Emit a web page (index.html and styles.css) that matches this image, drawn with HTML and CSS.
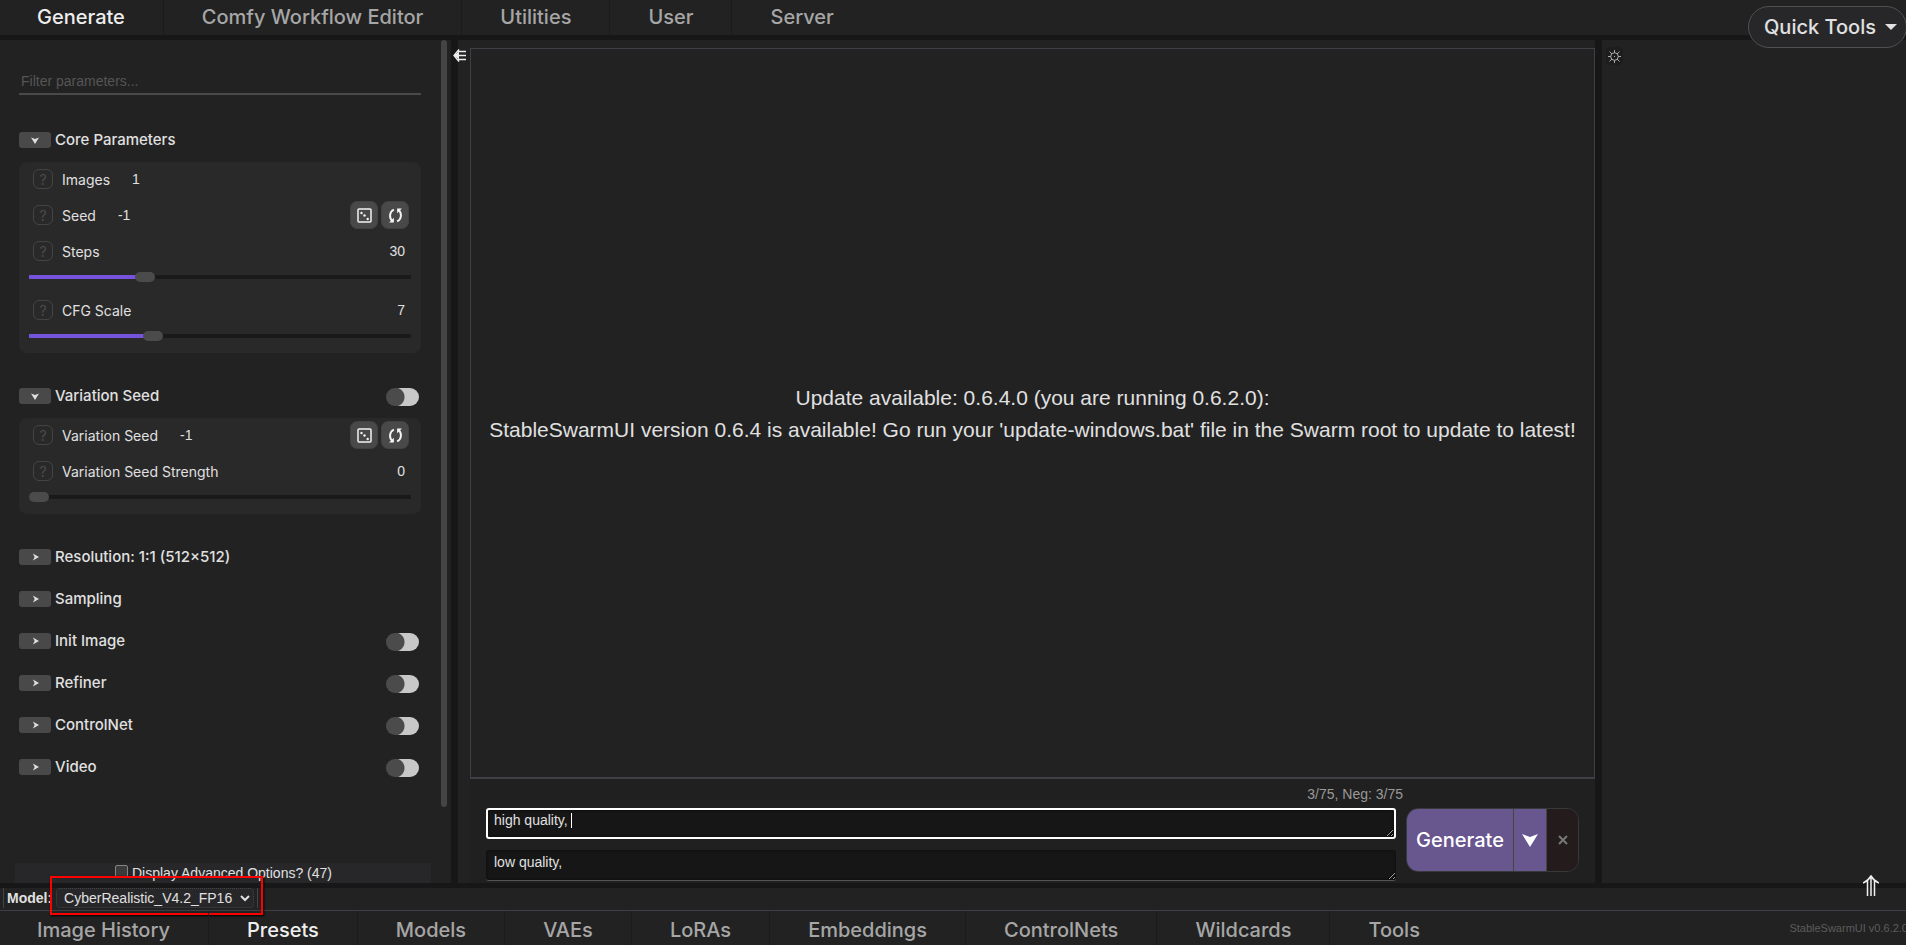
FILE: index.html
```html
<!DOCTYPE html>
<html lang="en">
<head>
<meta charset="utf-8">
<title>StableSwarmUI</title>
<link rel="stylesheet" href="styles.css">
</head>
<body>
<svg class="defs" aria-hidden="true">
  <symbol id="i-down" viewBox="0 0 16 14"><path d="M0 1l8 3 8-3-8 13z"/></symbol>
  <symbol id="i-right" viewBox="0 0 8 8"><path d="M1 0l7 4-7 4 2-4z"/></symbol>
  <symbol id="i-dice" viewBox="0 0 15 15"><rect x="1" y="1" width="13" height="13" rx="1" fill="none" stroke="currentColor" stroke-width="1.5"/><circle cx="4.5" cy="5" r="1.2"/><circle cx="7.5" cy="7.5" r="1.2"/><circle cx="10.700" cy="11" r="1.2"/></symbol>
  <symbol id="i-loop" viewBox="0 0 14 14"><path d="M5.500 1.500C1 3.500 1 9.500 4 12M8.500 12.500C13 10.500 13 4.500 10 2" fill="none" stroke="currentColor" stroke-width="1.800"/><path d="M1 13.500h4.500V9zM13 .5H8.500V5z"/></symbol>
</svg>
<div class="app">
  <nav class="tabs tabs-top">
    <a href="#generate" class="tab active">Generate</a>
    <a href="#comfy" class="tab">Comfy Workflow Editor</a>
    <a href="#utilities" class="tab">Utilities</a>
    <a href="#user" class="tab">User</a>
    <a href="#server" class="tab">Server</a>
    <button class="quick" type="button">Quick Tools<span class="caret-down"></span></button>
  </nav>
  <div class="split-h"></div>
  <main class="work">
    <aside class="side">
      <div class="side-body">
        <input class="filter" type="text" placeholder="Filter parameters..." aria-label="Filter parameters">
        <div class="groups">
        <section>
          <div class="head"><button class="fold" type="button" aria-label="Collapse Core Parameters"><svg class="down"><use href="#i-down"/></svg></button><h2>Core Parameters</h2></div>
          <div class="box">
            <div class="row"><button class="help" type="button">?</button><label for="images">Images</label><input id="images" class="num" value="1"></div>
            <div class="row"><button class="help" type="button">?</button><label for="seed">Seed</label><input id="seed" class="num" value="-1"><button class="sq" type="button" aria-label="Random seed"><svg><use href="#i-dice"/></svg></button><button class="sq" type="button" aria-label="Reuse seed"><svg><use href="#i-loop"/></svg></button></div>
            <div class="row"><button class="help" type="button">?</button><label for="steps">Steps</label><input class="num end" value="30" aria-label="Steps value"></div>
            <input id="steps" class="slider" type="range" min="1" max="100" value="30" style="--fill:30%">
            <div class="row"><button class="help" type="button">?</button><label for="cfg">CFG Scale</label><input class="num end" value="7" aria-label="CFG Scale value"></div>
            <input id="cfg" class="slider" type="range" min="1" max="20" value="7" style="--fill:33%">
          </div>
        </section>
        <section>
          <div class="head"><button class="fold" type="button" aria-label="Collapse Variation Seed"><svg class="down"><use href="#i-down"/></svg></button><h2>Variation Seed</h2><input class="toggle" type="checkbox" aria-label="Variation Seed"></div>
          <div class="box">
            <div class="row"><button class="help" type="button">?</button><label for="vseed">Variation Seed</label><input id="vseed" class="num" value="-1"><button class="sq" type="button" aria-label="Random variation seed"><svg><use href="#i-dice"/></svg></button><button class="sq" type="button" aria-label="Reuse variation seed"><svg><use href="#i-loop"/></svg></button></div>
            <div class="row"><button class="help" type="button">?</button><label for="vstr">Variation Seed Strength</label><input class="num end" value="0" aria-label="Variation Seed Strength value"></div>
            <input id="vstr" class="slider" type="range" min="0" max="1" value="0" style="--fill:0%">
          </div>
        </section>
        <section>
          <div class="head"><button class="fold" type="button" aria-label="Expand Resolution"><svg class="right"><use href="#i-right"/></svg></button><h2>Resolution: 1:1 (512×512)</h2></div>
          <div class="head"><button class="fold" type="button" aria-label="Expand Sampling"><svg class="right"><use href="#i-right"/></svg></button><h2>Sampling</h2></div>
          <div class="head"><button class="fold" type="button" aria-label="Expand Init Image"><svg class="right"><use href="#i-right"/></svg></button><h2>Init Image</h2><input class="toggle" type="checkbox" aria-label="Init Image"></div>
          <div class="head"><button class="fold" type="button" aria-label="Expand Refiner"><svg class="right"><use href="#i-right"/></svg></button><h2>Refiner</h2><input class="toggle" type="checkbox" aria-label="Refiner"></div>
          <div class="head"><button class="fold" type="button" aria-label="Expand ControlNet"><svg class="right"><use href="#i-right"/></svg></button><h2>ControlNet</h2><input class="toggle" type="checkbox" aria-label="ControlNet"></div>
          <div class="head"><button class="fold" type="button" aria-label="Expand Video"><svg class="right"><use href="#i-right"/></svg></button><h2>Video</h2><input class="toggle" type="checkbox" aria-label="Video"></div>
        </section>
        </div>
        <label class="advanced"><input type="checkbox">Display Advanced Options? (47)</label>
      </div>
      <div class="scroll"><div class="scroll-thumb"></div></div>
    </aside>
    <div class="split-v"></div>
    <section class="center">
      <button class="collapse" type="button" aria-label="Collapse sidebar"><svg viewBox="0 0 13 13"><path d="M5 2.500h8M2 6.500h11M5 10.500h8M6 .5L1 6.500l5 6" fill="none" stroke="currentColor" stroke-width="1.400"/><path d="M1 6.500l5-4v8z"/></svg></button>
      <div class="stage">
        <div class="canvas">
          <p>Update available: 0.6.4.0 (you are running 0.6.2.0):<br>StableSwarmUI version 0.6.4 is available! Go run your 'update-windows.bat' file in the Swarm root to update to latest!</p>
        </div>
        <div class="prompts">
          <div class="fields">
            <div class="tokens">3/75, Neg: 3/75</div>
            <div class="field"><textarea class="prompt focus" aria-label="Prompt">high quality, </textarea><span class="cursor"></span></div>
            <textarea class="prompt" aria-label="Negative prompt">low quality,</textarea>
          </div>
          <div class="go">
            <button class="go-main" type="button">Generate</button>
            <button class="go-more" type="button" aria-label="Generate options"><svg><use href="#i-down"/></svg></button>
            <button class="go-stop" type="button" aria-label="Interrupt"><svg viewBox="0 0 10 10"><path d="M1 1l8 8M9 1L1 9" stroke="currentColor" stroke-width="2"/></svg></button>
          </div>
        </div>
      </div>
    </section>
    <div class="split-v"></div>
    <aside class="batch">
      <button class="gear" type="button" aria-label="Display settings"><svg viewBox="0 0 13 13"><circle cx="6.500" cy="6.500" r="3.800" fill="none" stroke="currentColor"/><path d="M6.500 0v3M6.500 10v3M0 6.500h3M10 6.500h3M1.500 1.500l2.500 2.500M11.500 1.500L9 4M1.500 11.500L4 9M11.500 11.500L9 9M6 6.500h1" stroke="currentColor"/></svg></button>
    </aside>
  </main>
  <div class="split-h"><button class="raise" type="button" aria-label="Expand bottom bar"><svg viewBox="0 0 16 21"><path d="M4.500 5v16M8 1v20M11.500 5v16M0 8q5-2 8-7 3 5 8 7" fill="none" stroke="currentColor" stroke-width="1.500"/></svg></button></div>
  <div class="model">
    <div class="model-in"><label for="model">Model:</label><div class="pick"><select id="model"><option>CyberRealistic_V4.2_FP16</option></select><svg viewBox="0 0 10 7"><path d="M1 1l4 4 4-4" fill="none" stroke="currentColor" stroke-width="2"/></svg><span class="marker"></span></div></div>
  </div>
  <nav class="tabs tabs-bottom">
    <a href="#history" class="tab">Image History</a>
    <a href="#presets" class="tab active">Presets</a>
    <a href="#models" class="tab">Models</a>
    <a href="#vaes" class="tab">VAEs</a>
    <a href="#loras" class="tab">LoRAs</a>
    <a href="#embeddings" class="tab">Embeddings</a>
    <a href="#controlnets" class="tab">ControlNets</a>
    <a href="#wildcards" class="tab">Wildcards</a>
    <a href="#tools" class="tab">Tools</a>
    <span class="version"><span>StableSwarmUI v0.6.2.0</span></span>
  </nav>
</div>
</body>
</html>
```
FILE: styles.css
```css
* { box-sizing: border-box; }
body { margin: 0; background: #222; color: #e0e0e0; font: 14px "Liberation Sans", sans-serif; overflow: hidden; }
button, input, select, textarea { font: inherit; color: inherit; margin: 0; padding: 0; border: 0; background: none; }
svg { fill: currentColor; display: block; }
.defs { display: none; }
.app { height: 100vh; display: flex; flex-direction: column; }

.tabs { display: flex; flex: none; font: 500 20px Inter, sans-serif; position: relative; }
.tab { display: flex; align-items: center; padding: 0 38px; color: #a6a6a6; text-decoration: none; border-right: 1px solid #1b1b1b; white-space: nowrap; }
.tab:first-child { padding-left: 37px; }
.tab:nth-last-child(2) { border-right: 0; }
.tab.active { color: #eee; }
.tabs-top { height: 35px; }
.tabs-top .tab { padding-bottom: 2px; }
.tabs-bottom { height: 34px; }
.tabs-bottom .tab { padding-top: 3px; }
.quick { position: absolute; right: -1px; top: 6px; z-index: 2; width: 159px; height: 42px; border: 1px solid #505050; border-radius: 21px; background: #27272a; display: flex; align-items: center; gap: 9px; padding-left: 15px; white-space: nowrap; }
.caret-down { border: 6px solid transparent; border-top-color: #e0e0e0; border-bottom: 0; }

.split-h { flex: none; height: 5px; background: #171717; position: relative; }
.split-v { flex: none; width: 7px; background: #171717; }
.work { flex: 1; display: flex; min-height: 0; }

.side { width: 451px; flex: none; display: flex; justify-content: space-between; }
.side-body { flex: 1; display: flex; flex-direction: column; min-height: 0; }
.filter { margin: 28px 20px 24px 19px; height: 27px; flex: none; padding-left: 2px; border-bottom: 2px solid #4a4a4a; outline: 0; }
.filter::placeholder { color: #555; }
.groups { flex: 1; min-height: 0; margin: 0 20px 0 19px; display: flex; flex-direction: column; gap: 22px; }
.head { display: flex; align-items: center; height: 42px; }
.head h2 { margin: 0 auto 0 4px; padding-bottom: 2px; font: 500 15px Inter, sans-serif; }
.fold { width: 32px; height: 16px; border-radius: 3px; background: #494949; display: flex; align-items: center; justify-content: center; }
.down { width: 8px; height: 7px; }
.right { width: 7px; height: 8px; }
.toggle { appearance: none; width: 33px; height: 18px; margin: 2px 2px 0 0; border-radius: 9px; background: radial-gradient(circle at 9px 9px, #4b4b4b 9px, #c8c8c8 10px); }
.box { background: #292929; border-radius: 8px; margin-top: 1px; padding: 0 10px 1px; display: flex; flex-direction: column; }
.row { height: 36px; display: flex; align-items: center; gap: 3px; padding: 0 2px 2px 4px; }
.row label { font: 14px Inter, sans-serif; margin-left: 6px; white-space: nowrap; }
.help { width: 20px; height: 20px; flex: none; border: 1px solid #444; border-radius: 6px; color: #4c4c4c; font: 14px Inter, sans-serif; }
.num { flex: 1; min-width: 0; width: 40px; padding-left: 19px; }
.num.end { text-align: right; padding-right: 4px; }
.sq { width: 28px; height: 28px; flex: none; border-radius: 7px; border: 1px solid #414145; background: #494949; color: #f4f4f4; display: flex; align-items: center; justify-content: center; }
.sq svg { width: 15px; height: 15px; }
.slider { appearance: none; width: 100%; height: 14px; margin: 0 0 9px; background: linear-gradient(90deg, #7553dc var(--fill), #1a1a1a var(--fill)) center / 100% 4px no-repeat; }
.slider::-webkit-slider-thumb { appearance: none; width: 20px; height: 10px; border-radius: 5px; background: #4b4b4b; }
.advanced { flex: none; height: 20px; overflow: hidden; margin: 0 10px 0 15px; background: #27272a; display: flex; justify-content: center; gap: 4px; line-height: 20px; padding-left: 1px; white-space: nowrap; }
.advanced input { appearance: none; width: 13px; height: 13px; margin-top: 2px; border: 1px solid #858585; border-radius: 2px; background: #3b3b3b; }
.scroll { width: 10px; flex: none; }
.scroll-thumb { width: 6px; height: 91%; border-radius: 3px; background: #444; }

.center { flex: 1; min-width: 0; display: flex; position: relative; padding: 8px 0 0 12px; }
.collapse { position: absolute; left: -5px; top: 9px; width: 13px; height: 13px; color: #eee; }
.stage { flex: 1; min-width: 0; display: flex; flex-direction: column; }
.canvas { flex: 1; border: 1px solid #3f3f46; border-bottom-width: 2px; display: flex; align-items: center; justify-content: center; text-align: center; }
.canvas p { margin: 0; padding-top: 2px; font-size: 21px; line-height: 32px; }
.prompts { flex: none; background: #202020; display: flex; padding: 6px 16px 2px; gap: 10px; }
.fields { flex: 1; min-width: 0; }
.tokens { text-align: right; color: #999; line-height: 18px; margin: 0 -7px 5px 0; }
.field { position: relative; margin-bottom: 11px; }
.prompt { display: block; width: 100%; height: 31px; padding: 4px 8px; line-height: 17px; background: #161616; border-bottom: 1px solid #555; border-radius: 3px; resize: vertical; overflow: hidden; box-shadow: inset 0 0 2px 1px #101010; }
.prompt.focus { padding: 2px 6px; border: 2px solid #fff; outline: 0; }
.cursor { position: absolute; left: 85px; top: 5px; width: 1px; height: 15px; background: #fff; }
.go { flex: none; display: flex; height: 64px; margin-top: 23px; border: 1px solid #39393c; border-radius: 12px; overflow: hidden; }
.go-main { width: 106px; background: #68568f; color: #fff; font: 500 20px Inter, sans-serif; }
.go-more { width: 34px; background: #68568f; color: #fff; border: solid #444; border-width: 0 1px; display: flex; align-items: center; justify-content: center; }
.go-more svg { width: 16px; height: 14px; }
.go-stop { width: 31px; background: #241c1c; color: #777; display: flex; align-items: center; justify-content: center; }
.go-stop svg { width: 10px; height: 10px; }

.batch { width: 304px; flex: none; padding: 7px 4px; }
.gear { width: 17px; height: 18px; border-radius: 5px; background: #1d1d1d; color: #aaa; display: flex; align-items: center; justify-content: center; }
.gear svg { width: 13px; height: 13px; }
.raise { position: absolute; right: 27px; top: -8px; width: 16px; height: 21px; color: #f0f0f0; }

.model { flex: none; height: 23px; border-bottom: 1px solid #3f3f46; padding: 0 3px; display: flex; }
.model-in { display: flex; align-items: center; height: 20px; padding: 0 3px; gap: 4px; border: solid #444; border-width: 0 1px; }
.model-in label { font-weight: bold; }
.pick { position: relative; display: flex; align-items: center; }
.pick select { appearance: none; width: 198px; height: 20px; padding-left: 7px; background: #27272a; border: 1px dotted #444; border-radius: 4px; }
.pick svg { position: absolute; right: 4px; width: 10px; height: 7px; pointer-events: none; }
.marker { position: absolute; left: -6px; right: -9px; top: -12px; bottom: -7px; border: 2px solid #f00; box-shadow: 1px 1px 2px #000; pointer-events: none; }
.version { flex: 1; min-width: 0; display: flex; justify-content: flex-end; align-items: center; overflow: hidden; color: #5c5c5c; font: 11px "Liberation Sans", sans-serif; white-space: nowrap; }
.version span { margin-right: -2px; }
```
